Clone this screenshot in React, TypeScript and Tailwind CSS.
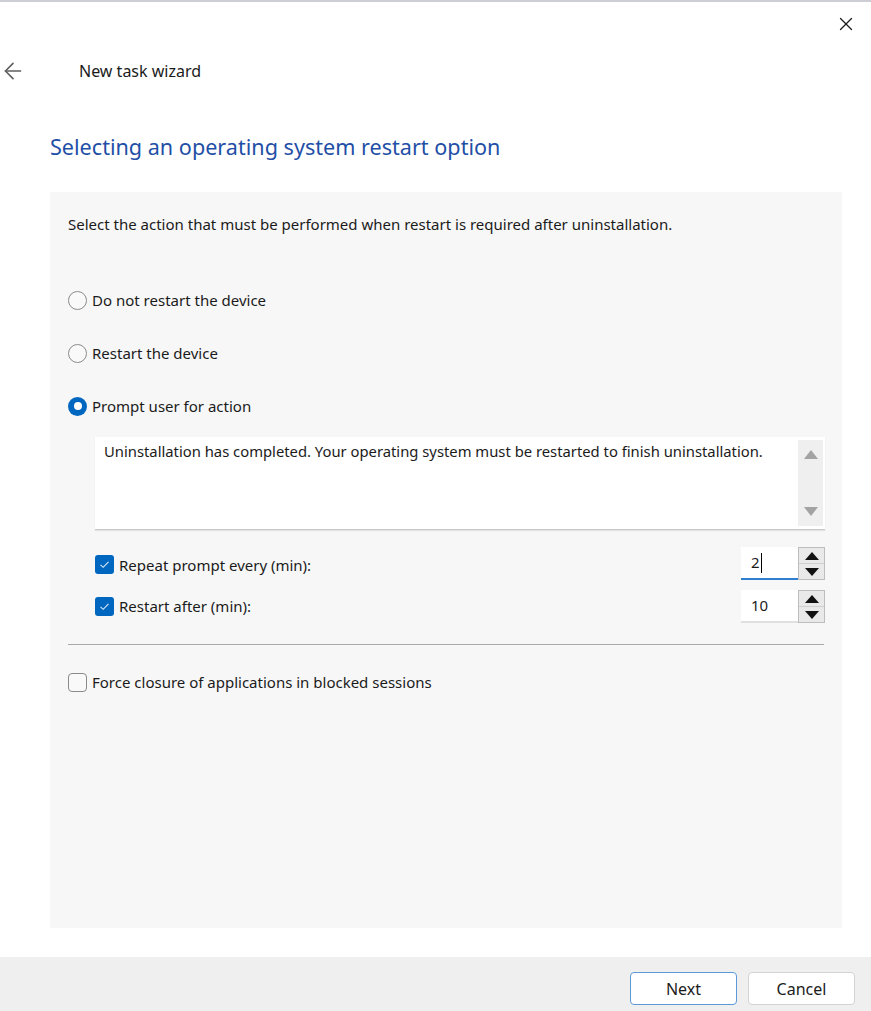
import { useState } from "react";
import { ArrowLeft, X } from "lucide-react";

const font = "font-['Noto_Sans','Open_Sans',sans-serif]";

function Radio({ checked, label, onClick }: { checked: boolean; label: string; onClick: () => void }) {
  return (
    <button onClick={onClick} className="flex items-center h-[20px] text-left">
      {checked ? (
        <span className="w-[19px] h-[19px] rounded-full bg-[#0067c0] flex items-center justify-center">
          <span className="w-[8px] h-[8px] rounded-full bg-white" />
        </span>
      ) : (
        <span className="w-[19px] h-[19px] rounded-full border border-[#8a8a8a] bg-[#f9f9f9]" />
      )}
      <span className="ml-[5px] text-[15px] text-[#1b1b1b]">{label}</span>
    </button>
  );
}

function Checkbox({ checked, label }: { checked: boolean; label: string }) {
  return (
    <span className="flex items-center">
      {checked ? (
        <span className="w-[19px] h-[19px] rounded-[3px] bg-[#0067c0] flex items-center justify-center">
          <svg width="11" height="9" viewBox="0 0 11 9" fill="none">
            <path d="M1.5 4.8 L4.2 7.3 L9.5 1.8" stroke="#dce9f7" strokeWidth="1.1" />
          </svg>
        </span>
      ) : (
        <span className="w-[19px] h-[19px] rounded-[4px] border border-[#8a8a8a] bg-[#f9f9f9]" />
      )}
      <span className="ml-[5px] text-[15px] text-[#1b1b1b]">{label}</span>
    </span>
  );
}

function Spin({ value, focused }: { value: string; focused?: boolean }) {
  return (
    <div className="flex h-[33px]">
      <div
        className={`w-[57px] bg-white flex items-center pl-[10px] text-[15px] text-[#1b1b1b] border-b-2 ${
          focused ? "border-[#2f7fd0]" : "border-[#e0e0e0]"
        }`}
      >
        {value}
        {focused && <span className="w-px h-[20px] bg-black ml-px" />}
      </div>
      <div className="w-[27px] flex flex-col border border-[#bdbdbd] bg-[#e9e9e9]">
        <div className="flex-1 flex items-center justify-center border-b border-[#cfcfcf]">
          <svg width="14" height="8" viewBox="0 0 14 8">
            <path d="M7 0 L14 8 L0 8 Z" fill="#111" />
          </svg>
        </div>
        <div className="flex-1 flex items-center justify-center">
          <svg width="14" height="8" viewBox="0 0 14 8">
            <path d="M0 0 L14 0 L7 8 Z" fill="#111" />
          </svg>
        </div>
      </div>
    </div>
  );
}

export default function App() {
  const [choice, setChoice] = useState("prompt");

  return (
    <div className={`w-[871px] h-[1011px] bg-white flex flex-col border-t-2 border-[#cdcdd6] ${font}`}>
      {/* Title bar */}
      <div className="h-[44px] flex items-center justify-end pr-[14px]">
        <X size={22} strokeWidth={1.4} className="text-[#1b1b1b]" />
      </div>

      <div className="h-[50px] flex items-center">
        <ArrowLeft size={26} strokeWidth={1.5} className="ml-0 text-[#5f5f5f]" />
        <span className="ml-[53px] text-[16px] text-[#1b1b1b]">New task wizard</span>
      </div>

      <h1 className="mt-[36px] ml-[50px] h-[30px] leading-[30px] text-[21.6px] text-[#1f4fa6]">
        Selecting an operating system restart option
      </h1>

      {/* Content panel */}
      <div className="mt-[30px] ml-[50px] mr-[29px] h-[736px] bg-[#f7f7f7] px-[18px] pt-[22px] flex flex-col">
        <p className="h-[20px] leading-[20px] text-[15px] text-[#1b1b1b]">
          Select the action that must be performed when restart is required after uninstallation.
        </p>

        <div className="mt-[56px] flex flex-col gap-[33px]">
          <Radio checked={choice === "none"} label="Do not restart the device" onClick={() => setChoice("none")} />
          <Radio checked={choice === "restart"} label="Restart the device" onClick={() => setChoice("restart")} />
          <Radio checked={choice === "prompt"} label="Prompt user for action" onClick={() => setChoice("prompt")} />
        </div>

        <div className="ml-[27px] mr-[-1px] mt-[21px] h-[93px] bg-white border-b border-[#c8c8c8] shadow-[0_1px_1px_rgba(0,0,0,0.08)] flex">
          <p className="flex-1 pl-[9px] pt-[4px] text-[14.8px] leading-[20px] text-[#1b1b1b]">
            Uninstallation has completed. Your operating system must be restarted to finish uninstallation.
          </p>
          <div className="w-[25px] my-[3px] mr-[2px] bg-[#efefef] flex flex-col justify-between items-center py-[10px]">
            <svg width="14" height="9" viewBox="0 0 14 9">
              <path d="M7 0 L14 9 L0 9 Z" fill="#a3a3a3" />
            </svg>
            <svg width="14" height="9" viewBox="0 0 14 9">
              <path d="M0 0 L14 0 L7 9 Z" fill="#a3a3a3" />
            </svg>
          </div>
        </div>

        <div className="ml-[27px] mr-[-1px] mt-[17px] flex items-end justify-between">
          <span className="pb-[4px]">
            <Checkbox checked label="Repeat prompt every (min):" />
          </span>
          <Spin value="2" focused />
        </div>
        <div className="ml-[27px] mr-[-1px] mt-[10px] flex items-center justify-between">
          <Checkbox checked label="Restart after (min):" />
          <Spin value="10" />
        </div>

        <div className="mt-[21px] h-px bg-[#a9a9a9]" />

        <div className="mt-[26px]">
          <Checkbox checked={false} label="Force closure of applications in blocked sessions" />
        </div>
      </div>

      {/* Footer */}
      <div className="mt-[29px] flex-1 bg-[#efefef] flex justify-end items-start pt-[15px] pr-[16px] gap-[11px]">
        <button className="w-[107px] h-[33px] rounded-[4px] bg-white border border-[#5b9ad8] text-[16px] text-[#1b1b1b]">
          Next
        </button>
        <button className="w-[107px] h-[33px] rounded-[4px] bg-white border border-[#d3d3d3] text-[16px] text-[#1b1b1b]">
          Cancel
        </button>
      </div>
    </div>
  );
}
